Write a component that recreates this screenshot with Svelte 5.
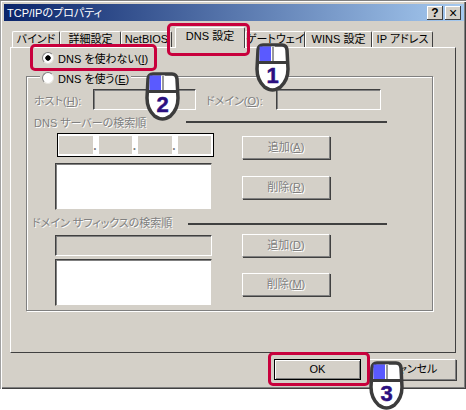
<script>
  const tabs = [
    { label: "バインド", width: 48 },
    { label: "詳細設定", width: 61 },
    { label: "NetBIOS", width: 51 },
    { label: "DNS 設定", width: 70, active: true },
    { label: "ゲートウェイ", width: 60 },
    { label: "WINS 設定", width: 67 },
    { label: "IP アドレス", width: 61 }
  ];

  const mice = [
    { n: 1, cls: "m1" },
    { n: 2, cls: "m2" },
    { n: 3, cls: "m3" }
  ];
</script>

<div class="window">
  <div class="titlebar">
    <span class="title">TCP/IPのプロパティ</span>
    <button class="cap">?</button>
    <button class="cap close">×</button>
  </div>

  <div class="tabs">
    {#each tabs as tab}
      <div class="tab" class:active={tab.active} style="width:{tab.width}px">{tab.label}</div>
    {/each}
  </div>

  <div class="panel">
    <div class="radio-row"><span class="radio checked"></span><span>DNS を使わない(<u>I</u>)</span></div>
    <div class="radio-row front"><span class="radio"></span><span>DNS を使う(<u>E</u>)</span></div>

    <div class="group">
      <div class="host-row">
        <span class="dim host-label">ホスト(<u>H</u>):</span>
        <div class="field host"></div>
        <span class="dim domain-label">ドメイン(<u>O</u>):</span>
        <div class="field domain"></div>
      </div>

      <div class="section first">
        <span class="dim label-a">DNS サーバーの検索順</span>
        <span class="rule"></span>
      </div>
      <div class="columns">
        <div class="left">
          <div class="ip">
            <span></span><i>.</i><span></span><i>.</i><span></span><i>.</i><span></span>
          </div>
          <div class="list"></div>
        </div>
        <div class="right top">
          <div class="btn dim">追加(<u>A</u>)</div>
          <div class="btn dim">削除(<u>R</u>)</div>
        </div>
      </div>

      <div class="section second">
        <span class="dim label-b">ドメイン サフィックスの検索順</span>
        <span class="rule"></span>
      </div>
      <div class="columns">
        <div class="left tight">
          <div class="field wide"></div>
          <div class="list"></div>
        </div>
        <div class="right bottom">
          <div class="btn dim">追加(<u>D</u>)</div>
          <div class="btn dim">削除(<u>M</u>)</div>
        </div>
      </div>
    </div>
  </div>

  <div class="footer">
    <div class="btn action default">OK</div>
    <div class="btn action">キャンセル</div>
  </div>
</div>

<!-- annotations on top of the dialog -->
<div class="mark mark-tab"></div>
<div class="mark mark-radio"></div>
<div class="mark mark-ok"></div>

{#each mice as m}
  <svg class="mouse {m.cls}" width="35" height="49" viewBox="0 0 35 49">
    <path d="M8 2H27Q31.5 2 32 7L33 26Q33 37 25.5 44Q21 47 17.5 47Q14 47 9.500 44Q2 37 2 26L3 7Q3.500 2 8 2Z" fill="#fff" stroke="#3c3c3c" stroke-width="3.500"/>
    <rect x="4.500" y="3.500" width="11.500" height="14.500" fill="#5a5aff"/>
    <rect x="16" y="3.500" width="4" height="14.500" fill="#fff"/>
    <rect x="17" y="4" width="2" height="14" fill="#9a9a9a"/>
    <path d="M3 19.500H32" stroke="#3c3c3c" stroke-width="3" fill="none"/>
    <text x="17.500" y="40" text-anchor="middle" class="num">{m.n}</text>
  </svg>
{/each}

<style>
  :global(body) {
    background: #fff;
    font-family: "Liberation Sans", "Noto Sans CJK JP", sans-serif;
    font-size: 11px;
    font-feature-settings: "palt";
    color: #000;
  }
  .window {
    position: relative;
    z-index: 0;
    width: 466px;
    height: 389px;
    box-sizing: border-box;
    padding-top: 4px;
    background: #d4d0c8;
    box-shadow: inset 0 1px #808080, inset 1px 0 #a0a0a0, inset 2px 2px #fff, inset -1px -1px #404040, inset -2px -2px #808080;
    overflow: hidden;
  }
  .titlebar {
    display: flex;
    align-items: center;
    gap: 2px;
    height: 17px;
    margin: 0 2px 0 4px;
    padding: 0 3px 0 3px;
    background: linear-gradient(90deg, #0a246a, #a6caf0);
  }
  .title {
    flex: 1;
    color: #fff;
    line-height: 16px;
  }
  .cap {
    width: 16px;
    height: 14px;
    padding: 0;
    border: 0;
    background: #d4d0c8;
    box-shadow: inset -1px -1px #404040, inset 1px 1px #fff;
    font: bold 12px/14px "Liberation Sans", sans-serif;
    color: #000;
  }
  .close {
    font-size: 14px;
    font-weight: 400;
  }
  .tabs {
    display: flex;
    height: 20px;
    margin-top: 6px;
    padding-left: 12px;
    align-items: flex-end;
  }
  .tab {
    box-sizing: border-box;
    height: 16px;
    border: 1px solid #404040;
    border-left-color: #fff;
    border-top-color: #fff;
    border-bottom: 0;
    border-radius: 2px 2px 0 0;
    text-align: center;
    line-height: 15px;
    white-space: nowrap;
  }
  .tab.active {
    position: relative;
    z-index: 1;
    height: 21px;
    margin: 0 0 -1px 3px;
    line-height: 17px;
    background: #d4d0c8;
  }
  .panel {
    box-sizing: border-box;
    width: 446px;
    height: 306px;
    margin-left: 10px;
    border: 1px solid #404040;
    border-left-color: #fff;
    border-top-color: #fff;
  }
  .radio-row {
    display: flex;
    align-items: center;
    gap: 4px;
    width: max-content;
    height: 20px;
    margin-left: 29px;
    padding: 0 2px;
  }
  .front {
    position: relative;
    z-index: 1;
    background: #d4d0c8;
  }
  .radio {
    box-sizing: border-box;
    width: 12px;
    height: 12px;
    border-radius: 50%;
    border: 1px solid #808080;
    border-right-color: #e8e6e0;
    border-bottom-color: #e8e6e0;
    background: #fff;
  }
  .radio.checked {
    background: radial-gradient(circle, #000 2.4px, #fff 3px);
  }
  .group {
    box-sizing: border-box;
    width: 407px;
    height: 235px;
    margin: -12px 0 0 15px;
    padding: 12px 0 0 7px;
    border: 1px solid #808080;
    box-shadow: inset 1px 1px #fff, 1px 1px #fff;
  }
  .dim {
    color: #808080;
    text-shadow: 1px 1px #fff;
  }
  .host-row {
    display: flex;
    align-items: center;
    height: 21px;
  }
  .host-label { width: 59px; }
  .domain-label { width: 70px; margin-left: 10px; white-space: nowrap; }
  .field {
    box-sizing: border-box;
    height: 21px;
    border: 1px solid #fff;
    border-left-color: #404040;
    border-top-color: #404040;
    box-shadow: inset 1px 1px #808080;
  }
  .host { width: 103px; }
  .domain { width: 105px; }
  .wide { width: 157px; }
  .section {
    display: flex;
    align-items: center;
    height: 14px;
    white-space: nowrap;
  }
  .first { margin-top: 5px; }
  .second { margin-top: 5px; margin-left: -2px; }
  .rule {
    height: 2px;
    background: #404040;
  }
  .label-a { width: 152px; }
  .label-a + .rule { width: 201px; }
  .label-b { width: 156px; }
  .label-b + .rule { width: 199px; position: relative; top: 2px; }
  .columns {
    display: flex;
    gap: 30px;
    margin: 4px 0 0 21px;
  }
  .second + .columns { margin-top: 6px; }
  .left {
    display: flex;
    flex-direction: column;
    gap: 6px;
    width: 157px;
  }
  .left.tight { gap: 3px; }
  .ip {
    box-sizing: border-box;
    display: flex;
    align-items: center;
    width: 157px;
    height: 24px;
    margin-left: 2px;
    border: 1px solid #000;
    box-shadow: inset 0 0 0 1px #fff;
    background: #fff;
    padding: 2px 2px 2px 1px;
  }
  .ip span {
    flex: 1;
    height: 100%;
    background: #d4d0c8;
  }
  .ip i {
    align-self: flex-end;
    width: 5px;
    font-style: normal;
    font-size: 12px;
    color: #808080;
    font-weight: 700;
    text-align: center;
    line-height: 16px;
    margin: 0 1px 0 0;
  }
  .list {
    box-sizing: border-box;
    height: 47px;
    background: #fff;
    border: 1px solid #d4d0c8;
    border-left-color: #404040;
    border-top-color: #404040;
    box-shadow: inset 1px 1px #808080;
  }
  .right {
    display: flex;
    flex-direction: column;
  }
  .right.top { padding-top: 3px; gap: 17px; }
  .right.bottom { margin-top: -1px; gap: 16px; }
  .btn {
    box-sizing: border-box;
    width: 88px;
    height: 23px;
    line-height: 21px;
    text-align: center;
    border: 1px solid #808080;
    border-left-color: #fff;
    border-top-color: #fff;
    box-shadow: 1px 1px #404040;
  }
  .footer {
    display: flex;
    justify-content: flex-end;
    gap: 8px;
    margin-top: 6px;
    padding-right: 10px;
  }
  .action {
    width: 87px;
    height: 21px;
    line-height: 19px;
  }
  .default {
    border: 1px solid #000;
    box-shadow: inset 1px 1px #fff, inset -1px -1px #808080;
  }
  .mark {
    position: absolute;
    box-sizing: border-box;
    border: 3px solid #c8003c;
    border-radius: 5px;
  }
  .mark-tab { left: 167px; top: 23px; width: 83px; height: 33px; }
  .mark-radio { left: 30px; top: 44px; width: 127px; height: 27px; }
  .mark-ok { left: 268px; top: 352px; width: 102px; height: 34px; }
  .mouse { position: absolute; }
  .m1 { left: 255px; top: 43px; }
  .m2 { left: 145px; top: 72px; }
  .m3 { left: 369px; top: 361px; }
  .num {
    font: 700 22px "Liberation Sans", sans-serif;
    fill: #2b0f80;
    stroke: #2b0f80;
    stroke-width: 0.5px;
  }
</style>
